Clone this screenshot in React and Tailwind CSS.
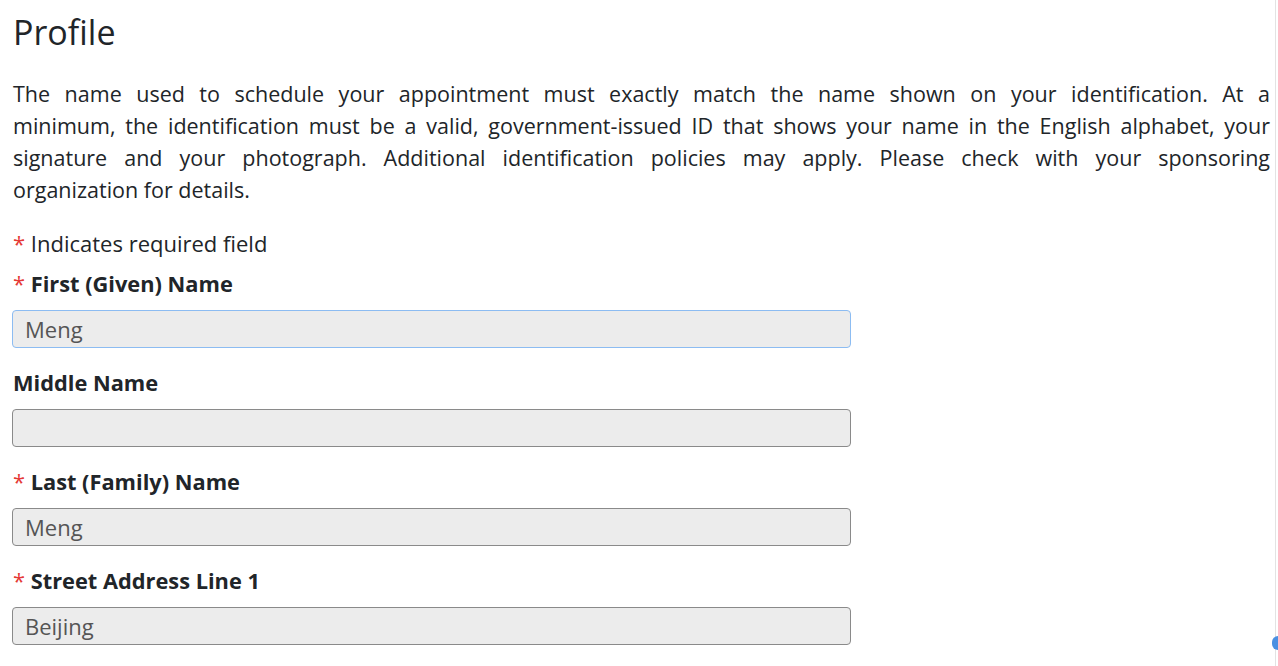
const fields = [
  { label: "First (Given) Name", value: "Meng", required: true, focused: true },
  { label: "Middle Name", value: "", required: false },
  { label: "Last (Family) Name", value: "Meng", required: true },
  { label: "Street Address Line 1", value: "Beijing", required: true },
];

const lines = [
  "The name used to schedule your appointment must exactly match the name shown on your identification. At a",
  "minimum, the identification must be a valid, government-issued ID that shows your name in the English alphabet, your",
  "signature and your photograph. Additional identification policies may apply. Please check with your sponsoring",
];

export default function App() {
  return (
    <div className="relative w-[1278px] h-[666px] overflow-hidden bg-white text-[#212529] font-['Open_Sans',sans-serif]">
      <div className="pl-[13px] pr-[8px] pt-[10px]">
        <h1 className="text-[34px] leading-[44px] font-normal">Profile</h1>
        <div className="mt-[24px] text-[21.5px] leading-[32px]">
          {lines.map((l) => (
            <span key={l} className="block text-justify [text-align-last:justify]">
              {l}
            </span>
          ))}
          <span className="block">organization for details.</span>
        </div>
        <p className="mt-[21px] text-[22px] leading-[32px]">
          <span className="text-[#e53935]">*</span> Indicates required field
        </p>
        <div className="mt-[9px] flex flex-col">
          {fields.map((f) => (
            <div key={f.label} className="mb-[19px] w-[838px]">
              <div className="text-[21.8px] leading-[32px] font-bold mb-[10px]">
                {f.required && <span className="text-[#e53935] font-normal">* </span>}
                {f.label}
              </div>
              <div
                className={
                  "h-[38px] -ml-[1px] rounded-[4px] bg-[#ececec] border px-[12px] flex items-center text-[22px] text-[#555] " +
                  (f.focused ? "border-[#8cbcf2]" : "border-[#8a8a8a]")
                }
              >
                {f.value}
              </div>
            </div>
          ))}
        </div>
      </div>
      <div className="absolute right-[2px] top-0 h-full w-[1px] bg-[#e3e3e3]" />
      <div className="absolute right-[-6px] top-[636px] w-[12px] h-[14px] rounded-full bg-[#4a90e2]" />
    </div>
  );
}
